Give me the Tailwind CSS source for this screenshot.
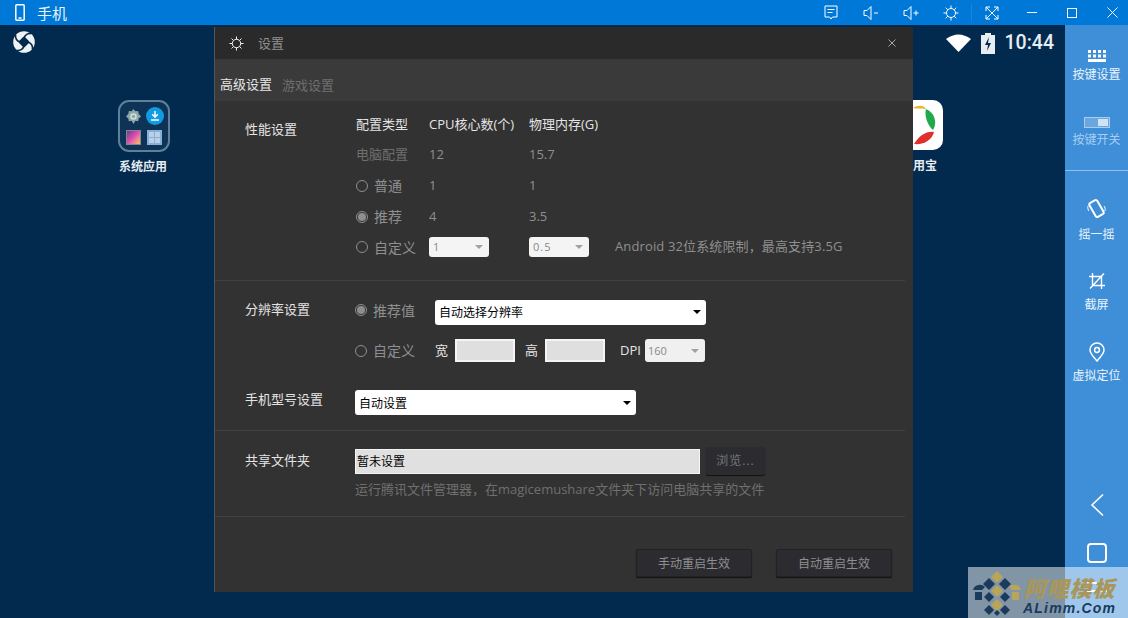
<!DOCTYPE html>
<html lang="zh"><head><meta charset="utf-8"><script src="https://cdn.jsdelivr.net/npm/@tailwindcss/browser@4"></script></head>
<body class="m-0">
<div class="relative w-[1128px] h-[618px] overflow-hidden flex flex-col bg-[#022a4e] text-[13px] text-white font-['Open_Sans','Noto_Sans_CJK_SC',sans-serif]">
  <!-- title bar -->
  <header class="h-[25px] shrink-0 bg-[#0078d7] flex items-center relative">
    <svg class="ml-[15px] w-[10px] h-[17px]" viewBox="0 0 10 17" fill="none" stroke="#fff" stroke-width="1.500"><rect x=".8" y=".8" width="8.400" height="15.400" rx="1"/><path d="M3.500 14h3"/></svg>
    <span class="ml-[12px] text-[15px] leading-[24px] text-[#e8f3fc]">手机</span>
    <div class="ml-auto -mr-[4px] flex items-center h-full">
      <div class="w-[40px] flex justify-center"><svg class="w-[16px] h-[17px]" viewBox="0 0 16 17" fill="none" stroke="#fff" stroke-width="1"><path d="M2 2h12v11H9.500L8 15 6.500 13H2z"/><path d="M4.500 5.500h7M4.500 8.500h5"/></svg></div>
      <div class="w-[40px] flex justify-center"><svg class="w-[16px] h-[16px]" viewBox="0 0 16 16" fill="none" stroke="#fff" stroke-width="1"><path d="M1 5.500h3L8 1.500v13l-4-4H1z"/><path d="M11 8h4"/></svg></div>
      <div class="w-[40px] flex justify-center"><svg class="w-[16px] h-[16px]" viewBox="0 0 16 16" fill="none" stroke="#fff" stroke-width="1"><path d="M1 5.500h3L8 1.500v13l-4-4H1z"/><path d="M10.500 8h5M13 5.500v5"/></svg></div>
      <div class="w-[40px] flex justify-center"><svg class="w-[16px] h-[16px]" viewBox="0 0 16 16" fill="none" stroke="#fff" stroke-width="1"><circle cx="8" cy="8" r="4.500"/><path d="M8 .5v3M8 12.500v3M.5 8h3M12.500 8h3M2.700 2.700l2.100 2.100M11.200 11.200l2.100 2.100M13.300 2.700l-2.100 2.100M4.800 11.200l-2.100 2.100"/></svg></div>
      <div class="w-px h-[17px] bg-white/10"></div>
      <div class="w-[40px] flex justify-center"><svg class="w-[14px] h-[14px]" viewBox="0 0 14 14" fill="none" stroke="#fff" stroke-width="1"><path d="M1 5V1h4M9 1h4v4M13 9v4H9M5 13H1V9M1 1l12 12M13 1L1 13"/></svg></div>
      <div class="w-[40px] flex justify-center"><div class="w-[10px] h-px bg-white"></div></div>
      <div class="w-[40px] flex justify-center"><div class="w-[10px] h-[10px] border border-white"></div></div>
      <div class="w-[40px] flex justify-center"><svg class="w-[11px] h-[11px]" viewBox="0 0 11 11" stroke="#fff" stroke-width="1"><path d="M.5.500l10 10M10.500.500l-10 10"/></svg></div>
    </div>
  </header>

  <div class="flex-1 flex min-h-0">
    <!-- android desktop -->
    <main class="relative flex-1">
      <svg class="absolute left-[13px] top-[6px] w-[22px] h-[22px]" viewBox="0 0 22 22"><circle cx="11" cy="11" r="10.800" fill="#eef2f5"/><path d="M11 7l4 4-4 4-4-4z" fill="#022a4e" stroke="#022a4e" stroke-width="2.500" stroke-linejoin="round"/><path d="M11 7C12 4 15 2 18.500 2.500M15 11c3 1 5 4 4.500 7.500M11 15c-1 3-4 5-7.500 4.500M7 11C4 10 2 7 2.500 3.500" fill="none" stroke="#022a4e" stroke-width="1.800"/></svg>

      <div class="absolute left-[118px] top-[75px] w-[52px] h-[52px] rounded-[11px] border-2 border-[#5f8099] bg-[#0d3457] grid grid-cols-2 place-items-center p-[3px]">
        <svg class="w-[15px] h-[15px]" viewBox="0 0 16 16"><path d="M8 0l2 2.500 3-.5.500 3L16 8l-2.500 2-.5 3-3-.5L8 16l-2-3.500-3 .5-.5-3L0 8l2.500-3 .5-3 3 .5z" fill="#8fa6a8"/><circle cx="8" cy="8" r="3.500" fill="#cfe0dc"/><circle cx="8" cy="8" r="1.800" fill="#8fa6a8"/></svg>
        <svg class="w-[18px] h-[18px]" viewBox="0 0 16 16"><circle cx="8" cy="8" r="8" fill="#129be5"/><path d="M8 3.500v5M5.500 6.500L8 9l2.500-2.500M4.500 11.500h7" fill="none" stroke="#fff" stroke-width="1.300"/></svg>
        <div class="w-[15px] h-[15px] border border-[#80878f] bg-gradient-to-br from-[#6a3b8c] via-[#e04fb0] to-[#f2c14a]"></div>
        <div class="w-[15px] h-[15px] bg-[#86b0d8] grid grid-cols-2 gap-px p-[2px]"><div class="bg-[#b9d0e6]"></div><div class="bg-[#b9d0e6]"></div><div class="bg-[#b9d0e6]"></div><div class="bg-[#b9d0e6]"></div></div>
      </div>
      <div class="absolute left-[119px] top-[134px] text-[12px] leading-[16px] font-bold text-[#e8edf2]">系统应用</div>

      <div class="absolute left-[880px] top-[75px] w-[63px] h-[50px] rounded-[10px] bg-white overflow-hidden">
        <svg class="w-full h-full" viewBox="0 0 63 50"><path d="M33 8c6-4 12-2 13 1-6-1-10 0-13-1z" fill="#eab52d"/><path d="M46 9c8 3 12 13 7 21-5-4-9-14-7-21z" fill="#1fa94b"/><path d="M34 44c10 1 18-4 20-12-8-1-15 4-20 12z" fill="#e0302c"/></svg>
      </div>
      <div class="absolute left-[913px] top-[133px] text-[12px] leading-[16px] font-bold text-[#e8edf2]">用宝</div>

      <div class="absolute right-[11px] top-[6px] flex items-center h-[24px]">
        <svg class="w-[25px] h-[18px]" viewBox="0 0 25 18"><path d="M0 5Q12.500-4 25 5L12.500 18z" fill="#fff"/></svg>
        <svg class="ml-[10px] w-[14px] h-[21px]" viewBox="0 0 14 21"><path d="M4 0h6v2h4v19H0V2h4z" fill="#e8edf2"/><path d="M8 4L4 12h3l-1 6 4-8H7z" fill="#022a4e"/></svg>
        <span class="ml-[10px] font-['Roboto'] font-medium text-[19.5px] leading-[24px] text-[#e8edf2]">10:44</span>
      </div>

      <!-- settings dialog -->
      <section class="absolute left-[214px] top-[2px] w-[699px] h-[565px] bg-[#323232] border-l border-[#555] flex flex-col text-[#8f8f8f]">
        <div class="h-[32px] shrink-0 bg-[#2a2a2a] flex items-center pl-[14px] pr-[17px]">
          <svg class="w-[15px] h-[15px]" viewBox="0 0 16 16" fill="none" stroke="#fff" stroke-width="1"><circle cx="8" cy="8" r="4.500"/><path d="M8 .5v3M8 12.500v3M.5 8h3M12.500 8h3M2.700 2.700l2.100 2.100M11.200 11.200l2.100 2.100M13.300 2.700l-2.100 2.100M4.800 11.200l-2.100 2.100"/></svg>
          <span class="ml-[14px] mt-[2px] text-[#8f8f8f]">设置</span>
          <svg class="ml-auto w-[8px] h-[8px]" viewBox="0 0 8 8" stroke="#b5b5b5" stroke-width=".9"><path d="M.5.500l7 7M7.500.500l-7 7"/></svg>
        </div>
        <div class="h-[42px] shrink-0 bg-[#3a3a3a] flex items-end pl-[5px] pb-[6px] gap-[10px]">
          <span class="text-[#e6e6e6] leading-[19px] mb-[1px]">高级设置</span>
          <span class="text-[#6f6f6f] leading-[19px]">游戏设置</span>
        </div>

        <div class="h-[180px] mr-[8px] border-b border-[#414141] pl-[30px] flex">
          <div class="w-[111px] pt-[19px] text-[#e4e4e4] leading-[18px]">性能设置</div>
          <div class="pt-[9px] flex-1">
            <div class="h-[29px] flex items-center text-[#e4e4e4]"><span class="w-[73px]">配置类型</span><span class="w-[100px]">CPU核心数(个)</span><span>物理内存(G)</span></div>
            <div class="h-[31px] flex items-center"><span class="w-[73px] text-[#6f6f6f]">电脑配置</span><span class="w-[100px]">12</span><span>15.7</span></div>
            <div class="h-[31px] flex items-center">
              <span class="w-[73px] flex items-center gap-[6px] text-[14px]"><span class="w-[12px] h-[12px] rounded-full border border-[#8f8f8f]"></span>普通</span><span class="w-[100px]">1</span><span>1</span></div>
            <div class="h-[31px] flex items-center">
              <span class="w-[73px] flex items-center gap-[6px] text-[14px]"><span class="w-[12px] h-[12px] rounded-full border border-[#8f8f8f] flex items-center justify-center"><span class="w-[8px] h-[8px] rounded-full bg-[#8f8f8f]"></span></span>推荐</span><span class="w-[100px]">4</span><span>3.5</span></div>
            <div class="h-[30px] flex items-center">
              <span class="w-[73px] flex items-center gap-[6px] text-[14px] whitespace-nowrap"><span class="w-[12px] h-[12px] rounded-full border border-[#8f8f8f]"></span>自定义</span>
              <div class="w-[100px]"><div class="w-[60px] h-[20px] rounded-[3px] bg-[#f4f4f4] text-[#888] text-[11px] flex items-center justify-between pl-[4px] pr-[6px]">1<span class="w-0 h-0 border-x-[4px] border-x-transparent border-t-[4px] border-t-[#a0a0a0]"></span></div></div>
              <div class="w-[60px] h-[20px] rounded-[3px] bg-[#f4f4f4] text-[#888] text-[11px] tracking-[1px] flex items-center justify-between pl-[4px] pr-[6px]">0.5<span class="w-0 h-0 border-x-[4px] border-x-transparent border-t-[4px] border-t-[#a0a0a0]"></span></div>
              <span class="ml-[26px] tracking-[0.13px]">Android 32位系统限制，最高支持3.5G</span>
            </div>
          </div>
        </div>

        <div class="h-[150px] mr-[8px] border-b border-[#414141] pl-[30px] pt-[15px]">
          <div class="h-[32px] flex items-center">
            <span class="w-[110px] text-[#e4e4e4] -mt-[4px]">分辨率设置</span>
            <span class="w-[80px] flex items-center gap-[6px] text-[14px] -mt-[4px]"><span class="w-[12px] h-[12px] rounded-full border border-[#8f8f8f] flex items-center justify-center"><span class="w-[8px] h-[8px] rounded-full bg-[#8f8f8f]"></span></span>推荐值</span>
            <div class="w-[271px] h-[25px] rounded-[3px] bg-white text-black text-[12px] flex items-center justify-between pl-[4px] pr-[5px]"><span class="mt-[2px]">自动选择分辨率</span><span class="w-0 h-0 border-x-[4px] border-x-transparent border-t-[4px] border-t-black"></span></div>
          </div>
          <div class="h-[41px] flex items-center mt-[2px]">
            <span class="w-[110px]"></span>
            <span class="w-[80px] flex items-center gap-[6px] text-[14px]"><span class="w-[12px] h-[12px] rounded-full border border-[#8f8f8f]"></span>自定义</span>
            <span class="text-[#e4e4e4] w-[20px]">宽</span>
            <div class="w-[60px] h-[23px] bg-[#dfdfdf] border-2 border-[#f4f4f4]"></div>
            <span class="text-[#e4e4e4] ml-[10px] w-[20px]">高</span>
            <div class="w-[60px] h-[23px] bg-[#dfdfdf] border-2 border-[#f4f4f4]"></div>
            <span class="text-[#e4e4e4] ml-[15px]">DPI</span>
            <div class="ml-[4px] w-[60px] h-[23px] rounded-[3px] bg-[#f0f0f0] text-[#888] text-[11px] flex items-center justify-between pl-[3px] pr-[6px]"><span class="mt-[2px]">160</span><span class="w-0 h-0 border-x-[4px] border-x-transparent border-t-[4px] border-t-[#a0a0a0]"></span></div>
          </div>
          <div class="h-[25px] flex items-center mt-[19px]">
            <span class="w-[110px] text-[#e4e4e4] -mt-[5px]">手机型号设置</span>
            <div class="w-[281px] h-[25px] rounded-[3px] bg-white text-black text-[12px] flex items-center justify-between pl-[4px] pr-[5px]"><span class="mt-[2px]">自动设置</span><span class="w-0 h-0 border-x-[4px] border-x-transparent border-t-[4px] border-t-black"></span></div>
          </div>
        </div>

        <div class="h-[86px] mr-[8px] border-b border-[#414141] pl-[30px] pt-[16px] flex">
          <span class="w-[110px] text-[#e4e4e4] leading-[26px]">共享文件夹</span>
          <div>
            <div class="flex items-center gap-[6px]">
              <div class="w-[345px] h-[25px] bg-[#e0e0e0] border border-[#f4f4f4] text-black text-[12px] flex items-center pl-[1px]"><span class="mt-[2px]">暂未设置</span></div>
              <div class="w-[59px] h-[28px] bg-[#2b2b30] shadow-[0_1px_1px_#111] rounded-[2px] flex items-center justify-center text-[#777] text-[12px] tracking-[1px]">浏览...</div>
            </div>
            <p class="mt-[4px] text-[#6f6f6f] leading-[20px]">运行腾讯文件管理器，在magicemushare文件夹下访问电脑共享的文件</p>
          </div>
        </div>

        <div class="flex-1 flex justify-end gap-[24px] pr-[21px] pt-[32px]">
          <button class="w-[116px] h-[28px] pt-[1px] bg-[#2b2b30] border border-[#222] shadow-[0_1px_1px_#111] rounded-[2px] text-[12px] text-[#8f8f8f]">手动重启生效</button>
          <button class="w-[116px] h-[28px] pt-[1px] bg-[#2b2b30] border border-[#222] shadow-[0_1px_1px_#111] rounded-[2px] text-[12px] text-[#8f8f8f]">自动重启生效</button>
        </div>
      </section>
    </main>

    <!-- right sidebar -->
    <aside class="w-[63px] shrink-0 bg-[#3f8fd8] flex flex-col items-center text-[12px] text-[#eaf4fc]">
      <div class="h-[146px] shrink-0 w-full border-b border-[#8cc0ee] flex flex-col items-center">
        <svg class="mt-[25px] w-[18px] h-[12px]" viewBox="0 0 18 12" fill="#fff"><path d="M0 0h3v3H0zM5 0h3v3H5zM10 0h3v3h-3zM15 0h3v3h-3zM0 4.500h3v3H0zM5 4.500h3v3H5zM10 4.500h3v3h-3zM15 4.500h3v3h-3zM0 9h18v3H0z"/></svg>
        <span class="mt-[4px] leading-[18px]">按键设置</span>
        <svg class="mt-[33px] w-[26px] h-[11px]" viewBox="0 0 26 11"><rect x=".5" y=".5" width="25" height="10" fill="#6aa7df" stroke="#a9cdf0"/><rect x="14" y="2" width="10" height="7" fill="#cfe3f6"/></svg>
        <span class="mt-[3px] leading-[18px] text-[#a9cdf0]">按键开关</span>
      </div>
      <svg class="mt-[27px] w-[19px] h-[21px] shrink-0" viewBox="0 0 19 21" fill="none" stroke="#fff"><rect x="5" y="2.500" width="9" height="16" rx="2" stroke-width="2" transform="rotate(-30 9.500 10.500)"/><path d="M1 8c-.5 2 0 4 1 5M18 13c.5-2 0-4-1-5"/></svg>
      <span class="mt-[7px] leading-[18px]">摇一摇</span>
      <svg class="mt-[29px] w-[16px] h-[16px] shrink-0" viewBox="0 0 16 16" fill="none" stroke="#fff" stroke-width="1.400"><path d="M3.500 0v12.500H16M0 3.500h12.500V16M15 .5L1 15.500"/></svg>
      <span class="mt-[7px] leading-[18px]">截屏</span>
      <svg class="mt-[28px] w-[16px] h-[20px] shrink-0" viewBox="0 0 16 20" fill="none" stroke="#fff" stroke-width="1.500"><path d="M8 19C4 14.500 1 11.500 1 8a7 7 0 0114 0c0 3.500-3 6.500-7 11z"/><circle cx="8" cy="8" r="2.400"/></svg>
      <span class="mt-[5px] leading-[18px]">虚拟定位</span>
      <svg class="mt-[108px] w-[14px] h-[24px] shrink-0" viewBox="0 0 14 24" fill="none" stroke="#fff" stroke-width="1.600"><path d="M13 1.500L2 12l11 10.500"/></svg>
      <div class="mt-[26px] w-[20px] h-[20px] shrink-0 rounded-[4px] border-2 border-white"></div>
      <div class="mt-[19px] w-[20px] h-[2px] shrink-0 bg-white"></div>
      <div class="mt-[6px] w-[20px] h-[2px] shrink-0 bg-white"></div>
    </aside>
  </div>

  <!-- watermark -->
  <div class="absolute left-[968px] top-[567px] w-[160px] h-[51px] bg-white/50 flex items-center pl-[5px]">
    <svg class="w-[48px] h-[46px] shrink-0" viewBox="0 0 48 46">
      <path d="M24 1l6 6-6 6-6-6z" fill="#b9a55a"/><path d="M16 8l6 6-6 6-6-6z" fill="#1b3a5c"/><path d="M32 8l6 6-6 6-6-6z" fill="#1b3a5c"/>
      <path d="M24 15l6 6-6 6-6-6z" fill="#b9a55a"/><path d="M16 22l5 5-5 5-5-5z" fill="#1b3a5c"/><path d="M32 22l5 5-5 5-5-5z" fill="#1b3a5c"/>
      <path d="M24 29l6 6-6 6-6-6z" fill="#b9a55a"/><path d="M16 35l5 5-5 5-5-5z" fill="#1b3a5c"/><path d="M32 35l5 5-5 5-5-5z" fill="#1b3a5c"/><path d="M24 40l3 3-3 3-3-3z" fill="#1b3a5c"/>
      <path d="M0 20a7 7 0 0112-3l-3 3z" fill="#1b3a5c"/><path d="M2 22h7v8H2z" fill="#1b3a5c"/><path d="M48 20a7 7 0 00-12-3l3 3z" fill="#b9a55a"/><path d="M39 22h7v8h-7z" fill="#b9a55a"/>
    </svg>
    <div class="ml-[2px] pt-[7px] flex flex-col items-center">
      <span class="text-[22px] leading-[21px] font-black italic tracking-[1px] text-[#a8975c] h-[21px]">阿哩模板</span>
      <span class="mt-[3px] text-[14px] leading-[12px] font-bold italic tracking-[1.200px] text-[#1b3a5c] font-['Liberation_Sans']">ALimm.Com</span>
    </div>
  </div>
</div>
</body></html>
